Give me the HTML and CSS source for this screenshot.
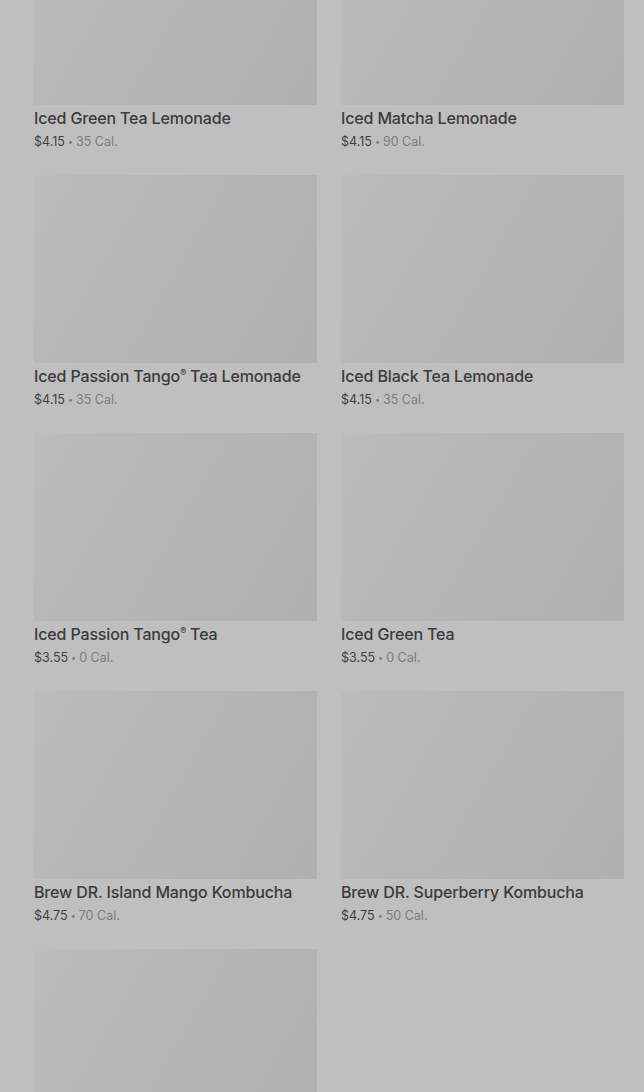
FILE: index.html
```html
<!DOCTYPE html>
<html>
<head>
  <title>Menu - Iced Teas</title>
  <link rel="stylesheet" href="styles.css">
</head>
<body>
  <main class="menu-grid">
    <div class="product">
      <div class="product-image"></div>
      <h3 class="product-name">Iced Green Tea Lemonade</h3>
      <p class="product-meta"><span class="price">$4.15</span><span class="dot">&bull;</span><span class="cal">35 Cal.</span></p>
    </div>
    <div class="product">
      <div class="product-image"></div>
      <h3 class="product-name">Iced Matcha Lemonade</h3>
      <p class="product-meta"><span class="price">$4.15</span><span class="dot">&bull;</span><span class="cal">90 Cal.</span></p>
    </div>
    <div class="product">
      <div class="product-image"></div>
      <h3 class="product-name">Iced Passion Tango<sup>&reg;</sup> Tea Lemonade</h3>
      <p class="product-meta"><span class="price">$4.15</span><span class="dot">&bull;</span><span class="cal">35 Cal.</span></p>
    </div>
    <div class="product">
      <div class="product-image"></div>
      <h3 class="product-name">Iced Black Tea Lemonade</h3>
      <p class="product-meta"><span class="price">$4.15</span><span class="dot">&bull;</span><span class="cal">35 Cal.</span></p>
    </div>
    <div class="product">
      <div class="product-image"></div>
      <h3 class="product-name">Iced Passion Tango<sup>&reg;</sup> Tea</h3>
      <p class="product-meta"><span class="price">$3.55</span><span class="dot">&bull;</span><span class="cal">0 Cal.</span></p>
    </div>
    <div class="product">
      <div class="product-image"></div>
      <h3 class="product-name">Iced Green Tea</h3>
      <p class="product-meta"><span class="price">$3.55</span><span class="dot">&bull;</span><span class="cal">0 Cal.</span></p>
    </div>
    <div class="product">
      <div class="product-image"></div>
      <h3 class="product-name">Brew DR. Island Mango Kombucha</h3>
      <p class="product-meta"><span class="price">$4.75</span><span class="dot">&bull;</span><span class="cal">70 Cal.</span></p>
    </div>
    <div class="product">
      <div class="product-image"></div>
      <h3 class="product-name">Brew DR. Superberry Kombucha</h3>
      <p class="product-meta"><span class="price">$4.75</span><span class="dot">&bull;</span><span class="cal">50 Cal.</span></p>
    </div>
    <div class="product">
      <div class="product-image"></div>
    </div>
  </main>
</body>
</html>
```

FILE: styles.css
```css
body {
  font-family: 'Inter', 'Roboto', sans-serif;
  margin: 0;
  background-color: #bfbfbf;
  color: #3a3a3a;
  overflow: hidden;
  height: 1092px;
}

/* page is scrolled a bit, first row is cut off at the top */
.menu-grid {
  margin-top: -83px;
  padding: 0 20px 0 34px;
  display: grid;
  grid-template-columns: 1fr 1fr;
  column-gap: 24px;
  row-gap: 23px;
}

.product-image {
  height: 188px;
  background: linear-gradient(120deg, #bcbcbc 0%, #b5b5b5 50%, #b0b0b0 100%);
}

.product-name {
  margin: 2px 0 0;
  font-size: 16px;
  line-height: 22px;
  font-weight: 500;
  color: #3b3b3b;
  letter-spacing: -0.15px;
}

.product-name sup {
  font-size: 9px;
  vertical-align: 6px;
  line-height: 0;
}

.product-meta {
  margin: 3px 0 0;
  font-size: 12.5px;
  line-height: 20px;
  color: #7c7c7c;
}

.product-meta .price {
  color: #3f3f3f;
}

.product-meta .dot {
  font-size: 9px;
  margin: 0 3px;
  vertical-align: 1px;
}

.product-meta .cal {
  color: #7c7c7c;
}
```
